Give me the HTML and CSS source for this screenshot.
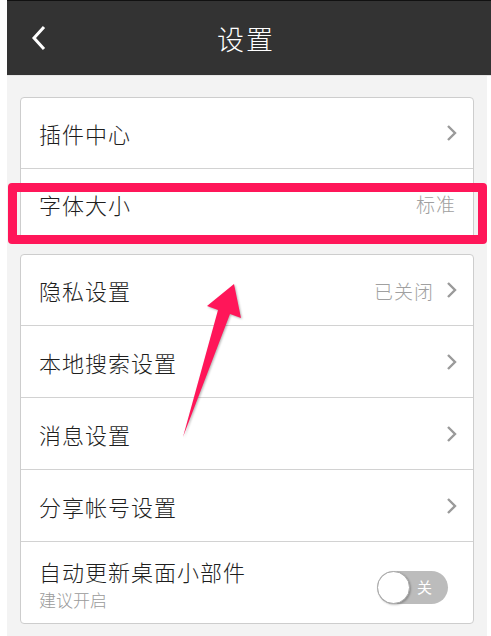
FILE: index.html
```html
<!DOCTYPE html>
<html lang="zh-CN">
<head>
  <meta charset="UTF-8">
  <meta name="viewport" content="width=device-width, initial-scale=1.0">
  <title>设置</title>
  <link rel="stylesheet" href="styles.css">
</head>
<body>

  <div class="page">
    <div class="header">
      <svg class="back" width="16" height="26" viewBox="0 0 16 26">
        <polyline points="13,2 3,13 13,24" fill="none" stroke="#fff" stroke-width="3"/>
      </svg>
      <h1 class="title">设置</h1>
    </div>

    <div class="content">
      <div class="card">
        <div class="row">
          <span class="label">插件中心</span>
          <span class="arrow-right"><svg width="11" height="18" viewBox="0 0 11 18"><polyline points="2,2 9,9 2,16" fill="none" stroke="#9a9a9a" stroke-width="2.4"/></svg></span>
        </div>
        <div class="row short">
          <span class="label">字体大小</span>
          <span class="value">标准</span>
        </div>
      </div>

      <div class="card">
        <div class="row">
          <span class="label">隐私设置</span>
          <span class="value">已关闭</span>
          <span class="arrow-right"><svg width="11" height="18" viewBox="0 0 11 18"><polyline points="2,2 9,9 2,16" fill="none" stroke="#9a9a9a" stroke-width="2.4"/></svg></span>
        </div>
        <div class="row">
          <span class="label">本地搜索设置</span>
          <span class="arrow-right"><svg width="11" height="18" viewBox="0 0 11 18"><polyline points="2,2 9,9 2,16" fill="none" stroke="#9a9a9a" stroke-width="2.4"/></svg></span>
        </div>
        <div class="row">
          <span class="label">消息设置</span>
          <span class="arrow-right"><svg width="11" height="18" viewBox="0 0 11 18"><polyline points="2,2 9,9 2,16" fill="none" stroke="#9a9a9a" stroke-width="2.4"/></svg></span>
        </div>
        <div class="row">
          <span class="label">分享帐号设置</span>
          <span class="arrow-right"><svg width="11" height="18" viewBox="0 0 11 18"><polyline points="2,2 9,9 2,16" fill="none" stroke="#9a9a9a" stroke-width="2.4"/></svg></span>
        </div>
        <div class="row tall">
          <div class="label-group">
            <span class="label">自动更新桌面小部件</span>
            <span class="hint">建议开启</span>
          </div>
          <div class="switch">
            <span class="knob"></span>
            <span class="switch-text">关</span>
          </div>
        </div>
      </div>
    </div>
  </div>

  <!-- annotation overlay -->
  <div class="highlight"></div>
  <svg class="pointer" width="491" height="636" viewBox="0 0 491 636">
    <polygon points="183,437 218,310 207,306 234,284 241,318 230,314" fill="#ff1659"/>
  </svg>

</body>
</html>
```

FILE: styles.css
```css
body {
  margin: 0;
  width: 491px;
  height: 636px;
  overflow: hidden;
  background: #fff;
  font-family: "Noto Sans CJK SC", "Noto Sans", sans-serif;
  position: relative;
}

.page {
  margin-left: 7px;
}

.header {
  height: 74px;
  border-top: 1px solid #111;
  background-color: #333;
  display: flex;
  align-items: center;
  justify-content: center;
  position: relative;
  border-bottom: 1px solid #e6e6e6;
}

.back {
  position: absolute;
  left: 24px;
  top: 24px;
}

.title {
  margin: 0 0 0 -6px;
  color: #fff;
  font-size: 27px;
  font-weight: 300;
  letter-spacing: 2px;
}

.content {
  width: 454px;
  background-color: #f3f3f3;
  padding: 21px 13px 12px;
  display: flex;
  flex-direction: column;
  gap: 15px;
}

.card {
  background-color: #fff;
  border: 1px solid #cdcdcd;
  border-radius: 4px;
  display: flex;
  flex-direction: column;
}

.row {
  height: 71px;
  display: flex;
  align-items: center;
  padding: 0 16px 0 18px;
  border-top: 1px solid #d2d2d2;
}

.row:first-child {
  border-top: none;
  height: 70px;
}

.row.short {
  height: 69px;
}

.row.tall {
  height: 81px;
}

.label {
  flex: 1;
  font-size: 22px;
  font-weight: 300;
  color: #1e1e1e;
  letter-spacing: 1px;
}

.value {
  font-size: 19px;
  font-weight: 300;
  color: #a0a0a0;
  margin-right: 1px;
  letter-spacing: 1px;
}

.arrow-right {
  display: flex;
  margin-left: 11px;
}

.label-group {
  flex: 1;
  display: flex;
  flex-direction: column;
  padding-top: 2px;
}

.hint {
  font-size: 17px;
  font-weight: 300;
  color: #9a9a9a;
  margin-top: 0;
}

.switch {
  width: 71px;
  height: 33px;
  border-radius: 17px;
  background-color: #bcbcbc;
  position: relative;
  margin-right: 9px;
  margin-top: 10px;
}

.knob {
  position: absolute;
  left: 0;
  top: 0;
  width: 31px;
  height: 31px;
  border-radius: 50%;
  background-color: #fff;
  border: 1px solid #a8a8a8;
  box-shadow: 1px 1px 2px rgba(0, 0, 0, 0.25);
}

.switch-text {
  position: absolute;
  left: 40px;
  top: 5px;
  font-size: 15px;
  color: #fff;
}

.highlight {
  position: absolute;
  left: 8px;
  top: 183px;
  width: 461px;
  height: 43px;
  border: 9px solid #ff1659;
  border-radius: 4px;
}

.pointer {
  position: absolute;
  left: 0;
  top: 0;
  filter: drop-shadow(1px 1px 1px rgba(0, 0, 0, 0.3));
}
```
